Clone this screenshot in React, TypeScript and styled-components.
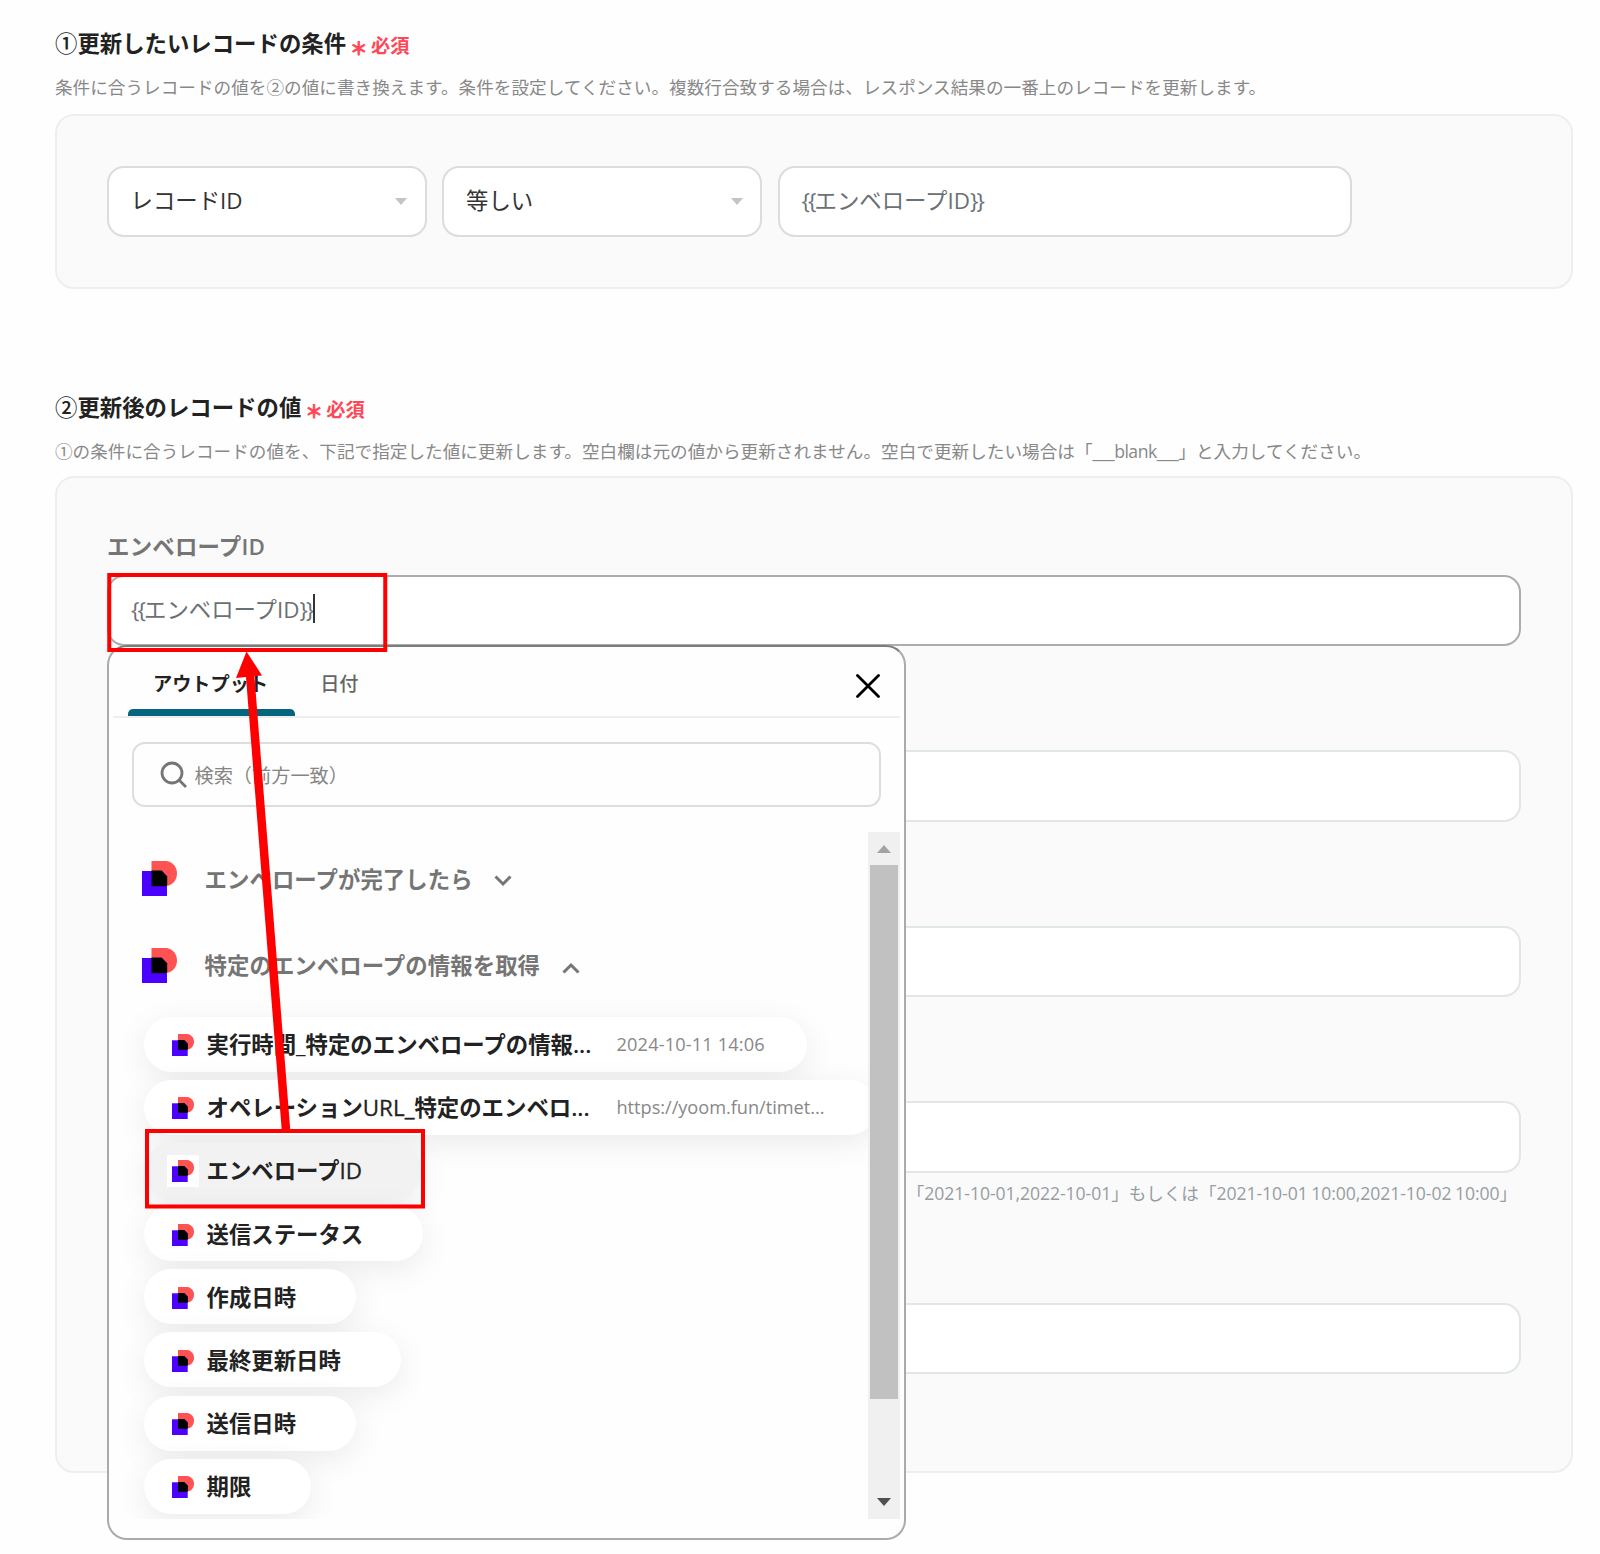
import React from "react";
import styled, { createGlobalStyle } from "styled-components";

const outputs = [
  {
    name: (
      <>
        実行時間_特定のエンベロープの情報...
      </>
    ),
    value: "2024-10-11 14:06",
  },
  {
    name: (
      <>
        オペレーション<small>URL_</small>特定のエンベロ...
      </>
    ),
    value: "https://yoom.fun/timet...",
  },
  {
    name: (
      <>
        エンベロープ<small>ID</small>
      </>
    ),
    hover: true,
  },
  { name: "送信ステータス" },
  { name: "作成日時" },
  { name: "最終更新日時" },
  { name: "送信日時" },
  { name: "期限" },
];

const ServiceLogo: React.FC<{ size: number }> = ({ size }) => (
  <svg width={size} height={size} viewBox="0 0 35 35">
    <path d="M9.5 0H24.5C31 1 35 6 35 12.5S31 24 24.5 25H9.5Z" fill="#ff5252" />
    <path d="M0 10H25V35H0Z" fill="#4c00ff" />
    <path d="M19.5 9.6H25.4V15.5Z" fill="#ff5252" />
    <path d="M9.5 9.6H19.5L25.2 15.5V24L24 25.2H9.5Z" fill="#000" />
  </svg>
);

const OutputTag: React.FC = () => (
  <TagText>
    <b>{"{{"}</b>エンベロープID<b>{"}}"}</b>
  </TagText>
);

const RequiredMark: React.FC = () => (
  <Required>
    <i>＊</i>必須
  </Required>
);

const App: React.FC = () => {
  return (
    <StyledPage>
      <GlobalStyle />
      <Heading>
        <small>①</small>更新したいレコードの条件
        <RequiredMark />
      </Heading>
      <Description>
        条件に合うレコードの値を②の値に書き換えます。条件を設定してください。複数行合致する場合は、レスポンス結果の一番上のレコードを更新します。
      </Description>
      <ConditionPanel>
        <Select>
          <span>レコードID</span>
          <Caret />
        </Select>
        <Select>
          <span>等しい</span>
          <Caret />
        </Select>
        <ConditionInput>
          <OutputTag />
        </ConditionInput>
      </ConditionPanel>

      <Heading $second>
        <small>②</small>更新後のレコードの値
        <RequiredMark />
      </Heading>
      <Description>
        ①の条件に合うレコードの値を、下記で指定した値に更新します。空白欄は元の値から更新されません。空白で更新したい場合は「<span>___blank___</span>」と入力してください。
      </Description>
      <ValuePanel>
        <Label>エンベロープID</Label>
        <Anchor>
          <Field $focus>
            <OutputTag />
            <TextCursor />
          </Field>
          <Popup>
            <Tabs>
              <Tab $active>アウトプット</Tab>
              <Tab>日付</Tab>
              <Close width="24" height="24" viewBox="0 0 24 24">
                <path d="M1.5 1.5L22.5 22.5M22.5 1.5L1.5 22.5" />
              </Close>
            </Tabs>
            <Search>
              <svg width="28" height="28" viewBox="0 0 28 28" fill="none" stroke="#757575" strokeWidth="2.8">
                <circle cx="12" cy="12" r="10" />
                <path d="M19 19L26 26" />
              </svg>
              検索（前方一致）
            </Search>
            <ScrollArea>
              <List>
                <Group>
                  <ServiceLogo size={35} />
                  <span>エンベロープが完了したら</span>
                  <Chevron width="18" height="12" viewBox="0 0 18 12">
                    <path d="M1.5 1.5L9 9L16.5 1.5" />
                  </Chevron>
                </Group>
                <Group>
                  <ServiceLogo size={35} />
                  <span>特定のエンベロープの情報を取得</span>
                  <Chevron width="18" height="12" viewBox="0 0 18 12">
                    <path d="M1.5 10.5L9 3L16.5 10.5" />
                  </Chevron>
                </Group>
                <Chips>
                  {outputs.map((item, i) => (
                    <Chip key={i} $hover={item.hover}>
                      <ChipIcon>
                        <ServiceLogo size={22} />
                      </ChipIcon>
                      <ChipName $wide={!!item.value}>{item.name}</ChipName>
                      {item.value && <ChipValue>{item.value}</ChipValue>}
                    </Chip>
                  ))}
                </Chips>
              </List>
              <Scrollbar>
                <ScrollArrow $up />
                <Thumb />
                <ScrollArrow />
              </Scrollbar>
            </ScrollArea>
          </Popup>
        </Anchor>
        <Field />
        <Field />
        <Field />
        <Hint>「2021-10-01,2022-10-01」もしくは「2021-10-01 10:00,2021-10-02 10:00」</Hint>
        <Field $afterHint />
      </ValuePanel>

      {/* red marks: clicked output -> input */}
      <Marks width="1600" height="1554" viewBox="0 0 1600 1554">
        <rect x="109.25" y="575" width="276" height="75" />
        <rect x="147" y="1131" width="276" height="75.5" />
        <path d="M250 674L286 1130" strokeWidth="8.5" />
        <path d="M246.5 651.5L262 675.5L236 678Z" fill="#f00" stroke="none" />
      </Marks>
    </StyledPage>
  );
}

export default App;

const GlobalStyle = createGlobalStyle`
  * {
    box-sizing: border-box;
  }
  body {
    margin: 0;
    background: #fefefe;
    font-family: "Open Sans", "Noto Sans CJK JP", sans-serif;
  }
`

const StyledPage = styled.div`
  position: relative;
  width: 1600px;
  height: 1554px;
  overflow: hidden;
  padding: 27px 27px 0 55px;
  white-space: nowrap;
`

const Heading = styled.div<{ $second?: boolean }>`
  display: flex;
  height: 34px;
  line-height: 34px;
  margin-top: ${(p) => (p.$second ? "102px" : "0")};
  font-size: 22.4px;
  font-weight: 600;
  color: #222;

  small {
    font-size: inherit;
    font-weight: 500;
  }
`

const Required = styled.span`
  display: flex;
  margin: 2px 0 0 4px;
  font-size: 19.2px;
  color: #ff4757;

  i {
    width: 21px;
    padding-top: 1.5px;
    font-style: normal;
    font-size: 17.5px;
    -webkit-text-stroke: 0.8px #ff4757;
  }
`

const Description = styled.div`
  height: 27px;
  margin: 13px 0 12.5px;
  line-height: 27px;
  font-size: 17.6px;
  letter-spacing: 0.03px;
  color: #888;

  span {
    letter-spacing: -0.5px;
  }
`

const Panel = styled.div`
  border: 2px solid #eceff0;
  border-radius: 19px;
  background: #fafafa;
  width: 1518px;
`

const ConditionPanel = styled(Panel)`
  display: flex;
  gap: 15.5px;
  height: 175px;
  padding: 50px 49.5px;
`

const Box = styled.div`
  display: flex;
  align-items: center;
  height: 71.5px;
  padding: 0 22px;
  border: 2px solid #dcdcdc;
  border-radius: 17px;
  background: #fff;
  font-size: 22.4px;
`

const Select = styled(Box)`
  width: 320px;
  justify-content: space-between;
  padding-right: 17.5px;
  color: #333;

  span {
    padding-bottom: 3px;
  }
`

const Caret = styled.i`
  border: 6.5px solid transparent;
  border-top: 7px solid #c4c4c4;
  border-bottom: 0;
`

const ConditionInput = styled(Box)`
  width: 574.5px;
`

const TagText = styled.span`
  padding-bottom: 4px;
  color: #6b7075;

  b {
    font-weight: 400;
    letter-spacing: -1.9px;
  }
`

const ValuePanel = styled(Panel)`
  height: 997px;
  margin-top: -1px;
  padding: 52px 50px 0;
`

const Label = styled.div`
  height: 34px;
  margin-bottom: 10.5px;
  line-height: 34px;
  font-size: 22.4px;
  font-weight: 600;
  letter-spacing: 0.25px;
  color: #757575;
`

const Anchor = styled.div`
  position: relative;
`

const Field = styled(Box)<{ $focus?: boolean; $afterHint?: boolean }>`
  margin-top: ${(p) => (p.$focus ? "0" : p.$afterHint ? "95.5px" : "104px")};
  border-color: ${(p) => (p.$focus ? "#adadad" : "#e1e6e9")};
`

const TextCursor = styled.i`
  width: 2px;
  height: 29px;
  margin: 0 0 4px 0;
  background: #333;
`

const Popup = styled.div`
  position: absolute;
  top: 70.5px;
  left: -0.5px;
  z-index: 2;
  display: flex;
  flex-direction: column;
  width: 799px;
  height: 894.5px;
  border: 2px solid #aaa;
  border-top-color: #7d7d7d;
  border-radius: 20px;
  background: #fefefe;
`

const Tabs = styled.div`
  display: flex;
  position: relative;
  height: 70.5px;
  margin: 0 4px;
  padding-left: 15px;
  border-bottom: 2px solid #eee;
`

const Tab = styled.div<{ $active?: boolean }>`
  padding: 19px 26.5px 0 25.5px;
  line-height: 36px;
  font-size: 19.2px;
  font-weight: ${(p) => (p.$active ? 600 : 500)};
  color: ${(p) => (p.$active ? "#222" : "#666")};
  position: relative;

  &::after {
    content: "";
    display: ${(p) => (p.$active ? "block" : "none")};
    position: absolute;
    left: 0;
    right: 0;
    bottom: 0;
    height: 7px;
    border-radius: 5px 5px 0 0;
    background: #05657e;
  }
`

const Close = styled.svg`
  margin: 27px 19.5px 0 auto;
  stroke: #000;
  stroke-width: 2.8;
  stroke-linecap: round;
`

const Search = styled.div`
  display: flex;
  align-items: center;
  height: 65px;
  margin: 24.5px 23px 0;
  padding: 1px 0 0 26px;
  gap: 7px;
  border: 2px solid #ddd;
  border-radius: 13px;
  font-size: 19.2px;
  color: #858585;
`

const ScrollArea = styled.div`
  display: flex;
  height: 687px;
  margin: 24.5px 3.5px 0 0;
`

const List = styled.div`
  flex: 1;
  height: 100%;
  min-width: 0;
  overflow: hidden;
  padding: 29px 0 0 33px;
`

const Group = styled.div`
  display: flex;
  align-items: center;
  height: 35px;
  margin-bottom: 51.5px;
  font-size: 22.4px;
  font-weight: 600;
  color: #757575;

  > svg:first-child {
    margin-top: 1px;
  }

  span {
    margin: 0 21.5px 0 28px;
    letter-spacing: 0.07px;
  }
`

const Chevron = styled.svg`
  margin-top: 6px;
  fill: none;
  stroke: #757575;
  stroke-width: 3;
`

const Chips = styled.div`
  display: flex;
  flex-direction: column;
  align-items: flex-start;
  gap: 8.2px;
  margin: -17px 0 0 2.5px;
`

const Chip = styled.div<{ $hover?: boolean }>`
  display: flex;
  align-items: center;
  flex-shrink: 0;
  height: 55px;
  padding: 0 42px 0 23px;
  border-radius: 28px;
  background: ${(p) => (p.$hover ? "#f2f2f2" : "#fff")};
  box-shadow: 0 8px 32px rgba(0, 0, 0, 0.08);
`

const ChipIcon = styled.div`
  display: flex;
  align-items: center;
  justify-content: center;
  width: 32px;
  height: 32px;
  margin-top: 2px;
  background: #fff;
`

const ChipName = styled.span<{ $wide: boolean }>`
  width: ${(p) => (p.$wide ? "392px" : "auto")};
  margin: 0 18px 1px 7.5px;
  font-size: 22.4px;
  font-weight: 600;
  color: #222;

  small {
    font-size: inherit;
    font-weight: 500;
    -webkit-text-stroke: 0.3px #222;
  }
`

const ChipValue = styled.span`
  font-size: 18.2px;
  letter-spacing: 0.15px;
  color: #888;

  /* long urls run under the scrollbar */
  ${Chip}:nth-child(2) & {
    min-width: 218px;
    letter-spacing: -0.03px;
  }
`

const Scrollbar = styled.div`
  display: flex;
  flex-direction: column;
  align-items: center;
  width: 32.5px;
  background: #f0f0f0;
`

const ScrollArrow = styled.i<{ $up?: boolean }>`
  width: 0;
  margin: ${(p) => (p.$up ? "13.5px 0 12px" : "98.5px 0 0")};
  border: 7.5px solid transparent;
  ${(p) => (p.$up ? "border-top: 0; border-bottom: 8.5px solid #a3a3a3;" : "border-bottom: 0; border-top: 8.5px solid #505050;")}
`

const Thumb = styled.div`
  width: 28px;
  height: 534px;
  background: #c1c1c1;
`

const Hint = styled.div`
  height: 27px;
  margin: 7.5px 4px 0 0;
  line-height: 27px;
  text-align: right;
  font-size: 17.6px;
  letter-spacing: -0.06px;
  word-spacing: -1px;
  color: #979da2;
`

const Marks = styled.svg`
  position: absolute;
  top: 0;
  left: 0;
  z-index: 3;
  fill: none;
  stroke: #f00;
  stroke-width: 4;
`
